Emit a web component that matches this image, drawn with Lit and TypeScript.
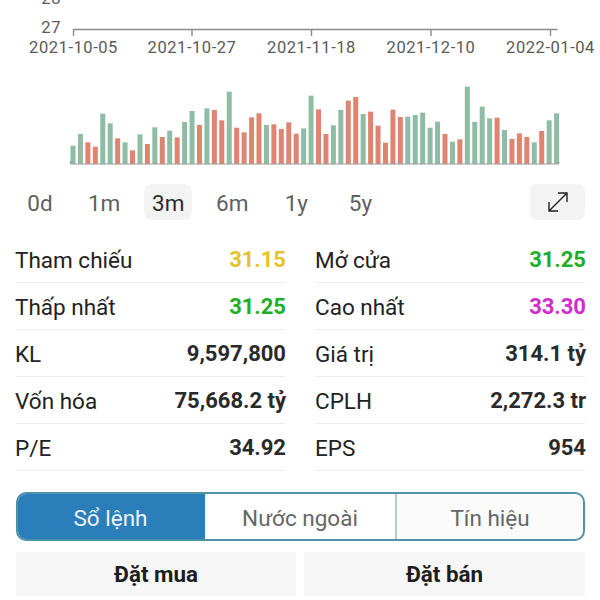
import { LitElement, html, css, svg } from "lit";
import { customElement } from "lit/decorators.js";

const G = "#8fbca5";
const R = "#e08472";
// [top in zoomed px (3x), colour]
const BARS: [number, string][] = [
  [437,G],[402,G],[427,R],[440,R],[341,G],[370,G],[415,R],[427,G],[451,R],[403,G],
  [432,R],[382,G],[411,R],[392,G],[412,R],[366,G],[333,G],[375,R],[325,G],[330,R],
  [361,R],[275,G],[383,R],[397,R],[352,R],[340,R],[375,G],[373,R],[387,R],[367,R],
  [401,R],[385,G],[287,G],[328,R],[402,R],[376,G],[330,G],[302,R],[291,R],[342,G],
  [335,R],[377,R],[428,R],[329,R],[351,R],[350,G],[345,G],[338,G],[383,G],[365,G],
  [402,R],[425,G],[418,R],[260,G],[366,G],[320,G],[355,G],[353,R],[390,G],[417,R],
  [400,R],[411,R],[427,G],[393,R],[361,G],[340,G],
];
const TICKS = [
  { x: 73.5, t: "2021-10-05" },
  { x: 192, t: "2021-10-27" },
  { x: 311.5, t: "2021-11-18" },
  { x: 431, t: "2021-12-10" },
  { x: 550.5, t: "2022-01-04" },
];
const PERIODS = ["0d", "1m", "3m", "6m", "1y", "5y"];
type Stat = { l: string; v: string; c?: string };
const ROWS: [Stat, Stat][] = [
  [{ l: "Tham chiếu", v: "31.15", c: "ref" }, { l: "Mở cửa", v: "31.25", c: "up" }],
  [{ l: "Thấp nhất", v: "31.25", c: "up" }, { l: "Cao nhất", v: "33.30", c: "ceil" }],
  [{ l: "KL", v: "9,597,800" }, { l: "Giá trị", v: "314.1 tỷ" }],
  [{ l: "Vốn hóa", v: "75,668.2 tỷ" }, { l: "CPLH", v: "2,272.3 tr" }],
  [{ l: "P/E", v: "34.92" }, { l: "EPS", v: "954" }],
];

@customElement("app-root")
export class AppRoot extends LitElement {
  static styles = css`
    :host {
      display: block;
      width: 600px;
      height: 600px;
      overflow: hidden;
      background: #fff;
      font-family: Roboto, "Noto Sans", sans-serif;
      color: #222;
    }
    .chart { display: block; width: 600px; height: 184px; }
    .axis-text { font-size: 16.5px; fill: #5a5a5a; letter-spacing: 0.55px; font-family: Roboto, sans-serif; }
    .periods { display: flex; align-items: center; padding: 0 15px 0 16px; height: 36px; gap: 16.1px; }
    .period {
      width: 48px; height: 36px; display: flex; align-items: center; justify-content: center;
      font-size: 22.5px; color: #5f5f5f; border-radius: 8px; padding-top: 1px; box-sizing: border-box;
    }
    .period.on { background: #f3f3f3; color: #2b2b2b; }
    .expand {
      margin-left: auto; width: 55px; height: 36px; border-radius: 7px; background: #f3f3f3;
      display: flex; align-items: center; justify-content: center;
    }
    .stats {
      display: grid; grid-template-columns: 269px 269px; column-gap: 31px;
      padding: 16px 0 0 16px;
    }
    .row {
      height: 47px; box-sizing: border-box; border-bottom: 1px solid #ececec;
      display: flex; align-items: center; justify-content: space-between;
      padding-top: 1px;
    }
    .label { font-size: 22.5px; color: #222; margin-left: -1px; }
    .value { font-size: 22px; font-weight: 700; color: #2a2a2a; margin-right: -1px; }
    .ref { color: #e3c42e; }
    .up { color: #1fae25; }
    .ceil { color: #d42ad0; }
    .tabs {
      margin: 21px 15px 0 16px; height: 49px; box-sizing: border-box;
      border: 2px solid #4f93a8; border-radius: 10px; overflow: hidden;
      display: flex; background: #fbfbfb;
    }
    .tab {
      flex: 0 0 190px; display: flex; align-items: center; justify-content: center;
      font-size: 22.5px; color: #666; box-sizing: border-box; padding-top: 2px;
    }
    .tab + .tab { border-left: 2px solid #b9c8d2; }
    .tab.on { flex-basis: 189px; margin: -2px 0 -2px -2px; background: #2a7fba; color: #eaf4fa; }
    .tab.on + .tab { border-left: none; background: #fff; flex-basis: 190px; }
    .tab:last-child { flex: 1; }
    .actions {
      display: grid; grid-template-columns: 280px 281px; column-gap: 8px;
      padding: 11px 0 0 16px;
    }
    .action {
      height: 44px; background: #f7f7f7; display: flex; align-items: center; justify-content: center;
      font-size: 22.4px; font-weight: 700; color: #1e1e1e;
    }
  `;

  private chart() {
    const base = 164;
    return svg`
      <text class="axis-text" x="61" y="33" text-anchor="end">27</text>
      <text class="axis-text" x="61" y="4" text-anchor="end">28</text>
      <path d="M73.5 29.5H557.5" stroke="#8a8a8a" stroke-width="1.4" fill="none"/>
      ${TICKS.map(
        (k) => svg`
        <line x1=${k.x} x2=${k.x} y1="29" y2="36" stroke="#8a8a8a" stroke-width="1.4"/>
        <text class="axis-text" x=${k.x} y="53" text-anchor="middle">${k.t}</text>`
      )}
      ${BARS.map(([top, c], i) => {
        const x = 73 + i * 7.44 - 2.5;
        const y = top / 3;
        return svg`<rect x=${x} y=${y} width="5" height=${base - y} fill=${c}/>`;
      })}
      <path d="M70.5 161V163.5Q70.5 164 71.5 164H557Q559 164 559 162" stroke="#9a9a9a" stroke-width="1.2" fill="none"/>
    `;
  }

  render() {
    return html`
      <svg class="chart" viewBox="0 0 600 184">${this.chart()}</svg>
      <div class="periods">
        ${PERIODS.map((p) => html`<div class="period ${p === "3m" ? "on" : ""}">${p}</div>`)}
        <div class="expand">
          <svg width="22" height="22" viewBox="0 0 22 22" fill="none" stroke="#222" stroke-width="1.4">
            <path d="M2 20L20 2M11 2H20V11M2 11V20H11"/>
          </svg>
        </div>
      </div>
      <div class="stats">
        ${ROWS.flat().map(
          (s) => html`<div class="row">
            <span class="label">${s.l}</span>
            <span class="value ${s.c ?? ""}">${s.v}</span>
          </div>`
        )}
      </div>
      <div class="tabs">
        <div class="tab on">Sổ lệnh</div>
        <div class="tab">Nước ngoài</div>
        <div class="tab">Tín hiệu</div>
      </div>
      <div class="actions">
        <div class="action">Đặt mua</div>
        <div class="action">Đặt bán</div>
      </div>
    `;
  }
}
